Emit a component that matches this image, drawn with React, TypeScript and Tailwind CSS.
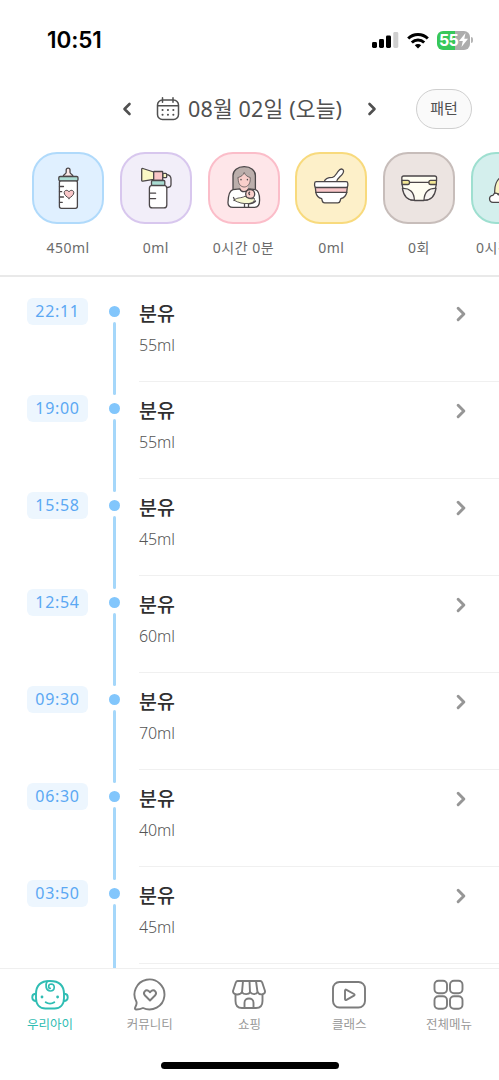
import type { ReactNode } from 'react'

interface Category {
  id: string
  label: string
  box: string
  icon: ReactNode
}

interface FeedRecord {
  time: string
  title: string
  amount: string
}

const RECORDS: FeedRecord[] = [
  { time: '22:11', title: '분유', amount: '55ml' },
  { time: '19:00', title: '분유', amount: '55ml' },
  { time: '15:58', title: '분유', amount: '45ml' },
  { time: '12:54', title: '분유', amount: '60ml' },
  { time: '09:30', title: '분유', amount: '70ml' },
  { time: '06:30', title: '분유', amount: '40ml' },
  { time: '03:50', title: '분유', amount: '45ml' },
]

// Shared frame for the category drawings
function TileIcon({ children }: { children: ReactNode }) {
  return (
    <svg viewBox="0 0 72 72" className="size-[72px] shrink-0" fill="#fff" stroke="#4b4648" strokeWidth="1.3" strokeLinecap="round" strokeLinejoin="round">
      {children}
    </svg>
  )
}

function BottleIcon() {
  return (
    <TileIcon>
      <path d="M31.2 24.5c0-2.2 3-2.2 3-4.3v-2.1c0-2.6 3.8-2.6 3.8 0v2.1c0 2.1 3 2.1 3 4.3z" fill="#fbe9e8" />
      <rect x="27.4" y="28.5" width="18" height="27.8" rx="2" />
      <rect x="26.8" y="24.5" width="19.2" height="4.3" rx="1.3" fill="#a9dcd2" />
      <path d="M27.5 34.5h4M27.5 39.7h2.2M27.5 45h4M27.5 50.3h2.8" fill="none" />
      <path d="M37 46.4c-2.6-1.8-4.8-3.5-4.8-5.7 0-2.6 3.4-3.3 4.8-.9 1.4-2.4 4.8-1.7 4.8.9 0 2.2-2.2 3.9-4.8 5.7z" fill="#f9c6c8" strokeWidth="1" />
    </TileIcon>
  )
}

function PumpIcon() {
  return (
    <TileIcon>
      <path d="M46 22.6c3 0 5 1.5 5 4.5v5.5c0 2-1 2.9-3.6 2.9" fill="none" />
      <path d="M21.7 17.3c0-.8.5-1 1.2-.8L33.7 20v7.3l-10.8 1.8c-.8.1-1.2-.2-1.2-.9z" fill="#faf8c4" />
      <rect x="42.7" y="21.3" width="4" height="4.4" rx="1" fill="#faf8c4" />
      <rect x="33.7" y="19.5" width="9" height="9" rx=".6" fill="#f9c6c8" />
      <rect x="29.4" y="33.3" width="17.4" height="22.6" rx="3" />
      <rect x="31.5" y="28.5" width="13.3" height="5" rx="1" fill="#a9dcd2" />
      <path d="M29.6 41.2h6M29.6 46.6h6" fill="none" />
    </TileIcon>
  )
}

function MotherIcon() {
  return (
    <TileIcon>
      <path d="M25 38V23.5c0-5 4.5-8.8 11.2-8.8s11.2 3.8 11.2 8.8V38z" fill="#bbaeab" />
      <path d="M32.2 33v6c1 3.5 6.6 3.5 7.6 0v-6z" fill="#f9cfcb" stroke="none" />
      <path d="M30.2 25.5c3-.8 5-2.300 6-5 1 2.700 3 4.200 6 5v2c0 4.400-2.600 7.500-6 7.500s-6-3.100-6-7.500z" fill="#f9cfcb" strokeWidth=".7" />
      <path d="M25 37.600c2.500-.7 5.200-.4 7-.6 1 3.500 6.500 3.700 8.400 0 3 .2 5.300 0 7 .6 2.500.8 4.200 5 4.200 10.400 0 4.700-1.700 7.400-5 7.400H25c-3.500 0-5.200-2-5-5.200.2-5.600 1.600-11.700 5-12.600z" />
      <path d="M25.500 45.500l1.500 3" fill="none" />
      <circle cx="42.2" cy="42" r="4.5" fill="#f9cfcb" />
      <path d="M26 48.200c3.500-3.400 7-1.500 11-4 2.600 2.300 5.500 3.200 9.500 2.300.3 2.500-1.800 4.700-6 5-5.500.4-9.500-.5-14.500-3.300z" fill="#f8f9d2" strokeWidth=".9" />
      <path d="M36.500 55.400v-3.500M40.500 51.800v3.500M40.500 51.800c3 0 5.500-.9 7-2.800M41.500 42.500c-.9-.7-.9-1.900.1-2.300" fill="none" />
      <path d="M33 27.500v.2M39.400 27.500v.2" strokeWidth="1.4" />
    </TileIcon>
  )
}

function BowlIcon() {
  return (
    <TileIcon>
      <path d="M29.2 29.6c.8-3 3.8-4.3 8.2-4.3 2.8-.5 3.6-3.1 5.7-5.9 1.6-2.2 3.3-2.8 4.6-1.900s1.100 2.800-.5 4.800c-2 2.500-5 3.800-5.500 7.300z" />
      <path d="M20.8 40.3h31c-.8 3.5-3 5.6-6 6.4l-.7 2.3c-.3 1.3-1 1.8-2.3 1.8H29.6c-1.3 0-2-.5-2.3-1.8l-.6-2.3c-3.2-.8-5.2-2.9-5.9-6.4z" />
      <path d="M20.3 35.3h32l-.6 5H20.9z" fill="#f9c6c8" />
      <rect x="19.6" y="29.6" width="33.2" height="5.9" rx="1.8" />
    </TileIcon>
  )
}

function DiaperIcon() {
  return (
    <TileIcon>
      <path d="M20.8 24h30.8c1.3 0 2 .7 2 2-.1 9.5-1.6 17-6.2 20.5-2.2 1.7-4.4 2-7 2h-8.4c-2.6 0-4.8-.3-7-2-4.6-3.5-6.1-11-6.2-20.5 0-1.3.7-2 2-2z" fill="#fffef2" />
      <path d="M19.4 36.4c7-.4 11.7 3.3 12 11.8-6.7.3-10.6-3.2-12-11.8zM53 36.4c-7-.4-11.7 3.3-12 11.8 6.7.3 10.6-3.2 12-11.8z" fill="#f6f3ef" />
      <path d="M26.5 30.4h19.4" />
      <path d="M18.9 28.3h6c1.2 0 1.6.5 1.6 2.1s-.4 2.1-1.6 2.1h-5.8zM53.5 28.3h-6c-1.2 0-1.6.5-1.6 2.1s.4 2.1 1.6 2.1h5.8z" fill="#f3e795" />
    </TileIcon>
  )
}

function SleepIcon() {
  return (
    <TileIcon>
      <path d="M23.8 42c-.6-7 1.2-15.5 9-18.5 8 1 15 8 15 18.5z" fill="#faf3c1" />
      <path d="M22 50.3c-4.6 0-4.6-7 0-7 1-2.7 4.2-2.7 5.2-.5 5-1.7 14.5-1.7 21 0 4.6 0 4.6 7.5 0 7.5z" />
    </TileIcon>
  )
}

const CATEGORIES: Category[] = [
  { id: 'bottle', label: '450ml', box: 'bg-[#e0f0ff] border-[#b0dafb]', icon: <BottleIcon /> },
  { id: 'pump', label: '0ml', box: 'bg-[#f2eef9] border-[#d8c7ee]', icon: <PumpIcon /> },
  { id: 'breast', label: '0시간 0분', box: 'bg-[#fee6e9] border-[#fbbdc9]', icon: <MotherIcon /> },
  { id: 'food', label: '0ml', box: 'bg-[#fdf0c9] border-[#f8da7d]', icon: <BowlIcon /> },
  { id: 'diaper', label: '0회', box: 'bg-[#ece4e1] border-[#c7bdba]', icon: <DiaperIcon /> },
  { id: 'sleep', label: '0시간 0분', box: 'bg-[#d4efed] border-[#9edfd0]', icon: <SleepIcon /> },
]

function StatusBar() {
  return (
    <div className="flex h-20 shrink-0 items-center justify-between pr-[26px] pl-[47px]">
      <span className="font-['Inter',sans-serif] text-[22.5px] font-semibold tracking-[-0.1px] text-black">10:51</span>
      <div className="flex items-center">
        <svg viewBox="0 0 27 18" className="mr-[8px] h-[18px] w-[27px]">
          <rect x="0" y="11" width="5" height="6" rx="1.4" />
          <rect x="7" y="8" width="5" height="9" rx="1.4" />
          <rect x="14" y="4.5" width="5" height="12.5" rx="1.4" />
          <rect x="21.3" y="1" width="5" height="16" rx="1.4" fill="#cfcfcf" />
        </svg>
        <svg viewBox="0 0 22 17" className="mr-[8px] h-[17px] w-[22px]" fill="none" stroke="#000" strokeWidth="3">
          <path d="M1.2 6.5a14 14 0 0 1 19.6 0" />
          <path d="M4.8 10.5a9 9 0 0 1 12.4 0" />
          <path d="M11 16.5l-3.2-3.3a4.6 4.6 0 0 1 6.4 0z" fill="#000" stroke="none" />
        </svg>
        <div className="flex items-center gap-px">
          <div className="flex h-[19px] w-[33px] items-center justify-center rounded-[6px] bg-linear-to-r from-[#37c759] from-55% to-[#adadad] to-55%">
            <span className="font-['Inter',sans-serif] text-[16px] leading-none font-bold tracking-[-0.8px] text-white">55</span>
            <svg viewBox="0 0 9 14" className="ml-px h-[14px] w-[9px]" fill="#fff">
              <path d="M6.5 0L0 8h3.8L2.5 14 9 5.8H5.3z" />
            </svg>
          </div>
          <div className="h-[6px] w-[2px] rounded-r-full bg-[#b5b5b5]" />
        </div>
      </div>
    </div>
  )
}

function Arrow({ dir, className }: { dir: 'left' | 'right'; className: string }) {
  return (
    <svg viewBox="0 0 10 14" className={className} fill="none" stroke="currentColor" strokeWidth="2.6" strokeLinecap="round" strokeLinejoin="round">
      <path d={dir === 'left' ? 'M7.5 2L2.5 7l5 5' : 'M2.5 2l5 5-5 5'} />
    </svg>
  )
}

function CalendarIcon() {
  return (
    <svg viewBox="0 0 24 26" className="mr-[8px] h-[26px] w-6" fill="none" stroke="#505050" strokeWidth="1.5" strokeLinecap="round">
      <rect x="1.5" y="4" width="21" height="19.5" rx="5" />
      <path d="M1.8 9.7h20.4M6.5 1.7v4.6M17 1.7v4.6" />
      <path d="M6.5 14h.1M11.9 14h.1M17.3 14h.1M6.5 18.7h.1M11.9 18.7h.1M17.3 18.7h.1" strokeWidth="2" />
    </svg>
  )
}

function DateHeader() {
  return (
    <div className="flex h-[58px] shrink-0 items-center pl-[122px] text-[#505050]">
      <Arrow dir="left" className="mr-[24px] h-[14px] w-[10px]" />
      <CalendarIcon />
      <span className="w-[155px] text-[21.5px] leading-none tracking-[0.15px] whitespace-nowrap">08월 02일 (오늘)</span>
      <Arrow dir="right" className="ml-[24px] h-[14px] w-[10px]" />
      <button className="ml-[39px] h-10 w-14 rounded-full border border-[#cfcfcf] bg-[#fafafa] pb-px text-[15px]">패턴</button>
    </div>
  )
}

function CategoryBar() {
  return (
    <div className="flex h-[139px] shrink-0 gap-[15.75px] overflow-hidden border-b-2 border-[#e9e9e9] pt-[14px] pl-8">
      {CATEGORIES.map(category => (
        <div key={category.id} className="flex w-[72px] shrink-0 flex-col items-center">
          <div className={`flex size-[72px] items-center justify-center rounded-[25px] border-2 ${category.box}`}>
            {category.icon}
          </div>
          <span className="mt-[14px] text-[14px] leading-5 tracking-[0.5px] whitespace-nowrap text-[#6b6b6b]">{category.label}</span>
        </div>
      ))}
    </div>
  )
}

function RecordRow({ record }: { record: FeedRecord }) {
  return (
    <div className="flex h-[97px] shrink-0 pl-[27px]">
      <div className="mt-[13px] flex h-[27px] w-[61px] items-center justify-center rounded-[6px] bg-[#edf6fe] pb-px text-[16px] tracking-[0.7px] text-[#5ba8f3]">
        {record.time}
      </div>
      {/* Timeline */}
      <div className="ml-[21px] flex w-[11px] flex-col items-center pt-[21px]">
        <div className="size-[11px] shrink-0 rounded-full bg-[#82c6fc]" />
        <div className="mt-[5px] -mb-[13px] w-[3px] flex-1 shrink-0 rounded-full bg-[#a5d7fa]" />
      </div>
      <div className="ml-[19px] flex flex-1 justify-between border-b border-[#f0f0f0]">
        <div className="flex flex-col pt-[16px]">
          <span className="text-[19.5px] leading-[26px] font-medium text-[#303030]">{record.title}</span>
          <span className="mt-[7px] text-[16px] leading-[22px] font-light tracking-[-0.1px] text-[#555]">{record.amount}</span>
        </div>
        <Arrow dir="right" className="mt-[21px] mr-[32px] h-4 w-[12px] text-[#969696]" />
      </div>
    </div>
  )
}

function NavIcon({ children }: { children: ReactNode }) {
  return (
    <svg viewBox="0 0 40 34" className="h-[34px] w-10" fill="none" stroke="currentColor" strokeWidth="1.9" strokeLinecap="round" strokeLinejoin="round">
      {children}
    </svg>
  )
}

const NAV_ITEMS = [
  {
    label: '우리아이',
    active: true,
    icon: (
      <NavIcon>
        <path d="M19.8 3C10.5 3 6 8 6 16v4c0 7 4 10.5 9.5 10.5h9c5.5 0 9.5-3.5 9.5-10.5v-4c0-8-4.5-13-14.2-13z" />
        <path d="M5.500 15.700c-4.400.3-4.400 7 .6 7.300M34.500 15.700c4.400.3 4.400 7-.6 7.300" />
        <path d="M17.300 3.300c-2.600 3.700-1.400 9.700 3 9.700 5 0 5.200-7 .8-7-2.900.1-3.300 4-.9 4.400" strokeWidth="1.7" />
        <path d="M15.700 24.300c2.400 1.700 6.200 1.700 8.600 0" />
        <path d="M12 19v.1M27.600 19v.1" strokeWidth="2.8" />
      </NavIcon>
    ),
  },
  {
    label: '커뮤니티',
    icon: (
      <NavIcon>
        <path d="M6.500 24A15 15 0 1 1 13 30c-2.200 1-4.600 1.500-6.500 1.500-1.600 0-1.900-1-1.100-2.500.9-1.600 1.500-3.300 1.100-5z" />
        <path d="M20 22.500l-5-5c-2.700-3 .7-6.600 3.800-4.400l1.200 1.100 1.200-1.100c3.100-2.200 6.500 1.400 3.800 4.400z" />
      </NavIcon>
    ),
  },
  {
    label: '쇼핑',
    icon: (
      <NavIcon>
        <path d="M8.700 3h22.600c1 0 1.500.5 1.900 1.500L36 13c.4 4-5.700 4.500-7.300 1.200-1.300 2.600-6.200 2.600-7.500 0-1.500 2.600-6.500 2.600-8.200 0-1.500 3-9.400 3.500-9-1.200l2.800-8.500C7.200 3.500 7.700 3 8.700 3z" />
        <path d="M14 3l-1 11.200M20.500 3l.5 11.200M27 3l1.500 11.200" />
        <path d="M6.500 16.500V23c0 4.500 2.300 7 6.500 7h14c4.200 0 6.500-2.500 6.500-7v-6.500M15.500 30v-5.300c0-5.600 9-5.600 9 0V30" />
      </NavIcon>
    ),
  },
  {
    label: '클래스',
    icon: (
      <NavIcon>
        <rect x="4" y="4" width="32" height="25.5" rx="6.5" />
        <path d="M16 12.700c0-1 .6-1.400 1.500-.9l7.500 4.200c.8.500.8 1.100 0 1.600l-7.500 4.200c-.9.500-1.500.1-1.500-.9z" />
      </NavIcon>
    ),
  },
  {
    label: '전체메뉴',
    icon: (
      <NavIcon>
        <rect x="5.5" y="2.8" width="12.5" height="12.5" rx="4" />
        <rect x="21" y="2.8" width="12.5" height="12.5" rx="4" />
        <rect x="5.5" y="18.3" width="12.5" height="12.5" rx="4" />
        <rect x="21" y="18.3" width="12.5" height="12.5" rx="4" />
      </NavIcon>
    ),
  },
]

function BottomNav() {
  return (
    <nav className="flex h-28 shrink-0 flex-col items-center border-t border-[#efefef] bg-white">
      <div className="flex w-full pt-[9px]">
        {NAV_ITEMS.map(item => (
          <div key={item.label} className={`flex flex-1 flex-col items-center ${item.active ? 'text-[#2fbdb3]' : 'text-[#7c7c7c]'}`}>
            {item.icon}
            <span className={`mt-[4px] text-[12.5px] leading-[18px] ${item.active ? '' : 'text-[#999]'}`}>{item.label}</span>
          </div>
        ))}
      </div>
      <div className="mt-auto mb-[11px] h-[7px] w-[178px] rounded-full bg-black" />
    </nav>
  )
}

function App() {
  return (
    <div className="flex h-screen flex-col overflow-hidden bg-white font-['Noto_Sans','Noto_Sans_CJK_KR',sans-serif]">
      <StatusBar />
      <DateHeader />
      <CategoryBar />
      {/* Feeding timeline */}
      <main className="flex min-h-0 flex-1 flex-col overflow-hidden pt-[8px]">
        {RECORDS.map(record => (
          <RecordRow key={record.time} record={record} />
        ))}
      </main>
      <BottomNav />
    </div>
  )
}

export default App
